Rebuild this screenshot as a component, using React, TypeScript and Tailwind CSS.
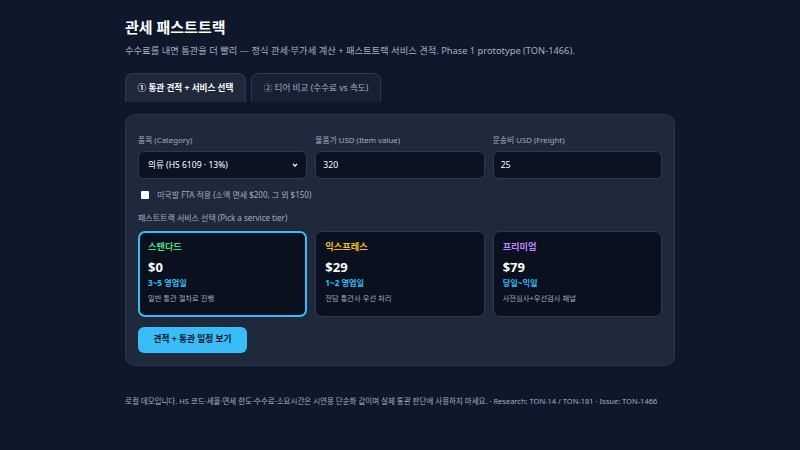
import React from "react";

const tiers = [
  { name: "스탠다드", color: "text-[#4ade80]", price: "$0", time: "3~5 영업일", desc: "일반 통관 절차로 진행", selected: true },
  { name: "익스프레스", color: "text-[#fbbf24]", price: "$29", time: "1~2 영업일", desc: "전담 통관사 우선 처리", selected: false },
  { name: "프리미엄", color: "text-[#c084fc]", price: "$79", time: "당일~익일", desc: "사전심사+우선검사 채널", selected: false },
];

export default function App() {
  return (
    <div
      className="w-[800px] h-[450px] bg-[#0f172a] text-[#e2e8f0] overflow-hidden"
      style={{ fontFamily: '"Noto Sans", "Noto Sans CJK KR", sans-serif' }}
    >
      <div className="pl-[125px] pr-[125px] pt-[16px]">
        <h1 className="text-[15px] leading-[22px] font-bold text-white">관세 패스트트랙</h1>
        <p className="mt-[6px] text-[9.3px] leading-[14px] text-[#a3afc2] whitespace-nowrap">
          수수료를 내면 통관을 더 빨리 — 정식 관세·부가세 계산 + 패스트트랙 서비스 견적. Phase 1 prototype (TON-1466).
        </p>
        <div className="mt-[15px] flex gap-[5px]">
          <div className="h-[29px] w-[121px] flex items-center justify-center rounded-t-[8px] border border-b-0 border-[#2b3a52] bg-[#1e293b] text-[8.6px] font-bold text-white">
            ① 통관 견적 + 서비스 선택
          </div>
          <div className="h-[29px] w-[130px] flex items-center justify-center rounded-t-[8px] border border-b-0 border-[#2b3a52] bg-[#172134] text-[8.6px] text-[#a3afc2]">
            ② 티어 비교 (수수료 vs 속도)
          </div>
        </div>
        <div className="mt-[12px] h-[252px] rounded-[10px] border border-[#2b3a52] bg-[#1e293b] px-[12px] pt-[19px]">
          <div className="grid grid-cols-3 gap-[8px]">
            <div>
              <div className="text-[7.8px] leading-[12px] text-[#a3afc2]">품목 (Category)</div>
              <div className="mt-[5px] h-[28px] rounded-[6px] border border-[#2b3a52] bg-[#0b1222] flex items-center justify-between pl-[9px] pr-[7px] text-[8.6px] text-white">
                <span>의류 (HS 6109 · 13%)</span>
                <svg width="8" height="8" viewBox="0 0 10 10"><path d="M2.5 3.8 L5 6.3 L7.5 3.8" stroke="white" strokeWidth="1.6" fill="none" /></svg>
              </div>
            </div>
            <div>
              <div className="text-[7.8px] leading-[12px] text-[#a3afc2]">물품가 USD (Item value)</div>
              <div className="mt-[5px] h-[28px] rounded-[6px] border border-[#2b3a52] bg-[#0b1222] flex items-center px-[7px] text-[8.6px] text-white">320</div>
            </div>
            <div>
              <div className="text-[7.8px] leading-[12px] text-[#a3afc2]">운송비 USD (Freight)</div>
              <div className="mt-[5px] h-[28px] rounded-[6px] border border-[#2b3a52] bg-[#0b1222] flex items-center px-[7px] text-[8.6px] text-white">25</div>
            </div>
          </div>
          <div className="mt-[10px] flex items-center gap-[8px] pl-[3px]">
            <div className="w-[8px] h-[8px] bg-white rounded-[1px]" />
            <span className="text-[8px] leading-[12px] text-[#a3afc2]">미국발 FTA 적용 (소액 면세 $200, 그 외 $150)</span>
          </div>
          <div className="mt-[11px] text-[8px] leading-[12px] text-[#a3afc2]">패스트트랙 서비스 선택 (Pick a service tier)</div>
          <div className="mt-[7px] grid grid-cols-3 gap-[8px]">
            {tiers.map((t) => (
              <div
                key={t.name}
                className={
                  t.selected
                    ? "h-[86px] rounded-[7px] border-2 border-[#38bdf8] bg-[#0a101d] px-[8px] pt-[7px]"
                    : "h-[86px] rounded-[7px] border border-[#2b3a52] bg-[#0a101d] px-[9px] pt-[8px]"
                }
              >
                <div className={`text-[9.2px] leading-[14px] font-bold ${t.color}`}>{t.name}</div>
                <div className="mt-[5px] text-[13px] leading-[16px] font-bold text-white">{t.price}</div>
                <div className="mt-[1px] text-[8.2px] leading-[14px] font-bold text-[#38bdf8]">{t.time}</div>
                <div className="mt-[2px] text-[7.3px] leading-[12px] text-[#a3afc2]">{t.desc}</div>
              </div>
            ))}
          </div>
          <div className="mt-[10px] w-[109px] flex h-[26px] items-center justify-center rounded-[6px] bg-[#38bdf8] text-[8.7px] font-bold text-[#0b1222]">
            견적 + 통관 일정 보기
          </div>
        </div>
        <div className="mt-[29px] text-[7.5px] leading-[12px] text-[#a3afc2] whitespace-nowrap">
          로컬 데모입니다. HS 코드·세율·면세 한도·수수료·소요시간은 시연용 단순화 값이며 실제 통관 판단에 사용하지 마세요. · Research: TON-14 / TON-181 · Issue: TON-1466
        </div>
      </div>
    </div>
  );
}
